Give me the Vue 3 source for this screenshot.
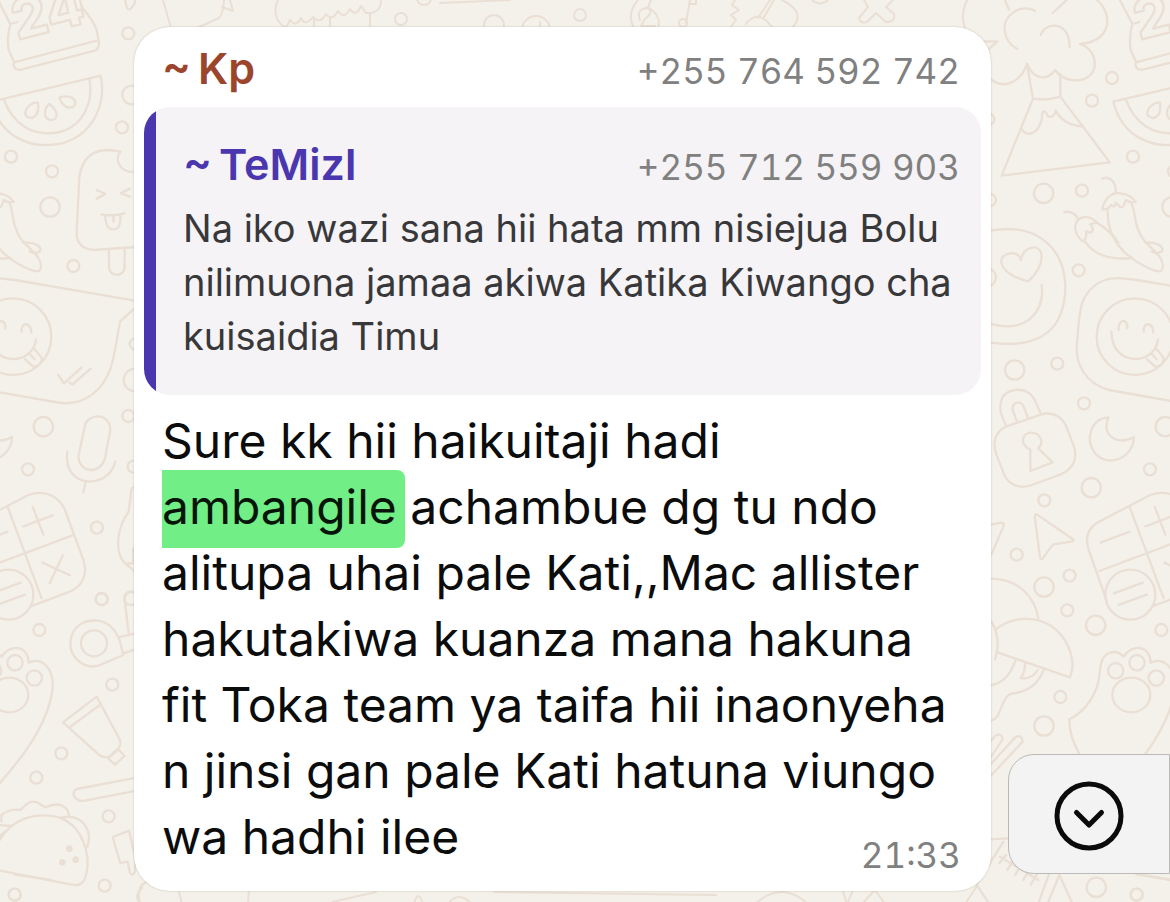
<script setup>
const message = {
  sender: '~\u2009Kp',
  phone: '+255 764 592 742',
  time: '21:33',
  firstLine: 'Sure kk hii haikuitaji hadi',
  highlight: 'ambangile',
  afterHighlight: 'achambue dg tu ndo',
  lines: [
    'alitupa uhai pale Kati,,Mac allister',
    'hakutakiwa kuanza mana hakuna',
    'fit Toka team ya taifa hii inaonyeha',
    'n jinsi gan pale Kati hatuna viungo',
    'wa hadhi ilee',
  ],
}

const quote = {
  sender: '~\u2009TeMizI',
  phone: '+255 712 559 903',
  lines: [
    'Na iko wazi sana hii hata mm nisiejua Bolu',
    'nilimuona jamaa akiwa Katika Kiwango cha',
    'kuisaidia Timu',
  ],
}

function scrollToEnd() {
  window.scrollTo({ top: document.body.scrollHeight, behavior: 'smooth' })
}
</script>

<template>
  <main class="chat">
    <svg class="wallpaper" aria-hidden="true">
      <defs>
        <g id="doodles">
          <!-- cake, melon, ice lolly -->
          <g transform="scale(0.3333)">
            <path d="M-6 0L31 72Q20 110 26 150L42 185Q36 208 60 210L285 152Q300 145 296 122L290 90Q285 70 245 20L240 0M42 187L290 122M31 72L52 66" />
            <text x="52" y="120" font-size="165" transform="rotate(-14 52 120)">24</text>
            <path d="M376 0Q380 30 388 29Q402 20 406 0" />
            <circle cx="385" cy="100" r="18" /><circle cx="395" cy="285" r="28" />
            <circle cx="366" cy="382" r="18" /><circle cx="33" cy="470" r="18" />
            <circle cx="156" cy="514" r="18" /><circle cx="150" cy="621" r="29" />
            <circle cx="220" cy="798" r="18" />
            <path d="M-26 305L302 227C320 310 280 405 185 430C90 450 0 410 -26 305ZM11 297C38 375 100 412 180 396C255 375 280 300 268 237" />
            <path d="M114 308C90 305 68 335 79 348C95 362 120 350 114 308ZM148 312C130 328 130 355 151 360C175 362 178 335 148 312ZM178 293C188 322 210 330 224 316C232 298 210 282 178 293Z" />
            <path d="M410 741L280 750Q230 745 230 700L238 530C248 465 285 450 330 450L362 455C340 480 362 522 410 515M290 570L316 582L290 596M390 566L362 580L390 590M304 643Q340 650 374 640M315 648C318 670 320 688 340 688C360 688 362 668 361 648M340 650L341 665M327 747V800C327 833 374 833 374 800V745" />
          </g>
          <!-- smiley bubble, microphone, calculator -->
          <g transform="translate(0 280) scale(0.3333)">
            <circle cx="39" cy="170" r="115" />
            <path d="M-10 150C-12 115 18 115 16 145M65 155C62 125 95 125 94 158M-32 155C-30 215 5 238 45 237C80 235 105 210 108 178M75 238L100 260C115 262 130 245 124 232L104 208M89 222L104 238" />
            <path d="M174 284L192 310L245 262M209 308L217 314L272 266" />
            <path d="M400 61L45 0L0 -5C-60 -10 -100 20 -120 70Q-130 110 -134 180C-145 250 -110 310 -40 330L165 366C250 385 320 330 340 235Q350 185 360 125L400 88" />
            <circle cx="130" cy="440" r="29" /><circle cx="84" cy="568" r="18" />
            <circle cx="385" cy="408" r="18" /><circle cx="405" cy="192" r="16" />
            <circle cx="405" cy="300" r="34" /><circle cx="401" cy="560" r="18" />
            <circle cx="291" cy="743" r="18" /><circle cx="305" cy="958" r="18" /><circle cx="392" cy="955" r="20" />
            <path d="M254 440C260 400 330 395 331 450L315 535C305 580 240 585 235 530ZM202 516C195 565 220 603 270 605C315 602 340 575 345 544M257 607L250 637" />
            <path d="M-55 718L85 645C140 625 180 655 195 690L250 840C265 885 245 920 210 935L95 978M-55 718C-95 735 -115 765 -100 810L-45 965M22 678L125 955M-68 873L218 766M98 680L130 764M70 739L158 706M127 848L210 886M189 825L149 910M-64 788L23 755" />
            <circle cx="25" cy="944" r="75" />
            <path d="M-25 940L62 908M-10 975L75 944" />
            <path d="M410 620L395 625L386 695C350 745 345 810 370 845L405 875M400 805V850L385 850" />
          </g>
          <!-- paw, tag, tube, taco -->
          <g transform="translate(0 580) scale(0.3333)">
            <circle cx="118" cy="150" r="18" /><circle cx="305" cy="57" r="18" />
            <circle cx="337" cy="314" r="18" /><circle cx="184" cy="520" r="18" />
            <circle cx="109" cy="593" r="18" /><circle cx="326" cy="709" r="18" />
            <circle cx="314" cy="917" r="18" /><circle cx="44" cy="944" r="18" />
            <circle cx="282" cy="190" r="39" />
            <path d="M370 225L295 257C255 268 210 235 211 190C215 135 255 118 295 122C330 128 350 155 360 185ZM355 172L415 158M370 220L415 205M386 160L374 60Q374 35 400 35" />
            <circle cx="45" cy="248" r="23" /><circle cx="103" cy="294" r="23" /><circle cx="-19" cy="272" r="23" />
            <ellipse cx="28" cy="345" rx="57" ry="52" />
            <path d="M-129 520Q-158 470 -158 418C-100 390 -75 330 -70 300L-64 255C-55 215 -20 205 5 230C30 190 85 195 86 248C125 230 165 265 157 330C145 430 70 530 -10 620" />
            <path d="M189 427L290 350L360 480Q365 500 347 512L330 529Q315 535 300 527ZM210 441L302 373M325 535L355 508L374 528L345 554Z" />
            <path d="M410 593L230 627C210 635 225 668 255 662L410 632" />
            <path d="M-10 795C35 710 110 695 180 713C250 740 270 825 260 875C255 905 245 920 215 914L-20 868M4 725V705Q30 685 60 690C75 680 80 665 100 665C120 665 125 680 138 682C170 665 205 675 207 708M185 713C240 700 280 745 262 800M-5 735L35 738M-5 770L20 752" />
            <g class="solid"><circle cx="208" cy="806" r="10" /><circle cx="187" cy="847" r="10" /><circle cx="227" cy="839" r="10" /></g>
            <path d="M338 771L387 752L405 830V875Q398 890 390 880L383 845L361 849ZM440 905C410 920 410 960 430 985" />
          </g>
          <!-- volcano, chillies, heart -->
          <g transform="translate(-152 0) scale(0.3333)">
            <path d="M195 32C145 10 100 50 104 90Q108 130 142 147M212 105C225 65 300 60 299 142M375 -5C430 35 430 125 330 132C390 150 395 245 310 241Q275 238 255 210C235 240 195 245 171 192C155 240 105 275 60 235M105 0L117 29M248 39L290 0M45 124H82L58 146" />
            <path d="M171 192L189 296L95 527L419 487L271 290V222M189 296Q230 303 271 290M153 385C175 420 215 395 217 340C220 330 228 333 233 347C245 355 255 347 257 332C275 365 305 378 340 379" />
            <circle cx="426" cy="234" r="18" /><circle cx="366" cy="302" r="18" />
            <circle cx="221" cy="580" r="29" /><circle cx="336" cy="572" r="18" />
            <circle cx="326" cy="811" r="18" /><circle cx="55" cy="358" r="18" />
            <circle cx="60" cy="600" r="18" /><circle cx="50" cy="832" r="28" />
            <path d="M398 536C420 525 440 550 437 578M397 628C405 590 430 575 450 580C480 583 488 595 497 606Q480 610 467 600Q461 628 449 620L437 608Q436 625 423 615Q415 630 397 628ZM413 632C412 700 445 750 500 785C540 810 570 820 576 810C590 780 550 750 525 725C490 680 500 650 485 610" />
            <path d="M283 636Q310 632 324 656M338 724C310 700 308 665 335 653Q360 646 381 667L361 673C375 690 368 704 348 694Q352 718 338 724ZM345 725C375 770 430 780 488 774M375 665Q420 690 445 728M525 728C560 725 585 740 575 755Q560 763 545 755" />
            <path d="M60 692C210 665 285 755 286 860C285 980 220 1050 60 1028M215 855C225 940 165 1000 60 972M175 844C110 830 80 790 100 769C125 750 150 762 153 780C160 740 205 730 214 760C220 800 190 830 175 844Z" />
          </g>
          <!-- padlock, moon, pointer -->
          <g transform="translate(-152 280) scale(0.3333)">
            <circle cx="134" cy="270" r="29" /><circle cx="262" cy="251" r="18" />
            <circle cx="342" cy="370" r="18" /><circle cx="364" cy="623" r="29" />
            <circle cx="223" cy="661" r="18" /><circle cx="140" cy="824" r="18" />
            <circle cx="299" cy="887" r="18" />
            <path d="M108 440L212 404C245 393 275 410 287 435L312 500C325 540 305 570 270 584L185 615C145 630 115 610 103 585L78 520C66 480 78 455 108 440ZM109 440L93 400C85 360 100 335 135 330C175 325 190 350 197 365L213 403M141 425L128 390C125 365 155 360 161 380L174 414" />
            <path d="M181 509C145 490 158 457 185 458C215 460 222 492 204 504L248 547L181 573Z" />
            <path d="M416 412C360 415 345 480 375 520C415 565 490 535 492 471C445 500 390 465 416 412Z" />
            <path d="M194 708Q195 700 204 706L308 777Q315 784 303 785L250 793Q235 810 220 834Q212 842 210 832ZM60 735L95 728Q104 728 100 740L64 824" />
          </g>
          <!-- umbrella, pencils, luggage tag -->
          <g transform="translate(-152 580) scale(0.3333)">
            <circle cx="222" cy="21" r="29" /><circle cx="292" cy="91" r="18" />
            <circle cx="377" cy="136" r="29" /><circle cx="271" cy="351" r="18" />
            <circle cx="222" cy="438" r="29" /><circle cx="379" cy="922" r="29" /><circle cx="500" cy="944" r="18" />
            <path d="M60 -4C150 -4 195 55 205 115M75 150C145 95 240 110 284 180C305 215 315 255 300 292L85 218M65 125Q95 180 75 238M137 240C120 290 95 310 60 317M222 268C205 310 180 335 120 342C90 360 95 415 65 421M165 250Q165 280 152 294Q185 300 203 270" />
            <path d="M60 485L78 466Q95 458 98 478L60 535M60 555L135 473Q155 460 158 485L60 590" />
            <path d="M60 778L110 775L225 780M100 785L20 915L70 990M90 830L205 900M88 850L108 825M112 870L130 840M136 885L152 855M160 900L178 868M182 914L200 885M238 880L205 970M268 885L225 990M268 885L305 965M500 884L610 900" />
          </g>
          <!-- edges above and below the bubble -->
          <g class="fine">
            <path d="M163 0L171 28M224 0Q223 15 219 18L197 28M230 0L233 11L222 7M278 0Q270 18 286 28L290 20Q296 28 301 18Q305 27 313 17Q320 25 326 14Q332 22 338 11Q344 20 350 9Q356 18 361 6L366 13Q381 14 381 0M314 18V28M330 17V28M370 13V28M440 3L510 0" />
            <circle cx="401" cy="19" r="6" /><circle cx="424" cy="-2" r="7" /><circle cx="494" cy="25" r="10" />
            <circle cx="536" cy="30" r="14" /><path d="M540 22V30" /><circle cx="580" cy="15" r="6" />
            <path d="M638 0Q626 14 634 28M651 0L648 7Q662 16 658 28M640 20Q636 9 647 8Q655 11 645 19L641 26H655M690 0L686 23M690 4H696V0" />
            <circle cx="683" cy="23" r="4" />
            <path d="M735 0L732 5L739 10L731 15L736 20L730 28M746 24Q758 8 772 27M774 0L764 17M782 0Q807 12 792 28M758 18L770 0M812 0Q820 7 828 0M864 0L868 7L859 18Q860 24 867 22L876 13L886 22Q896 22 894 14L886 7L893 0M967 0Q960 15 965 28" />
            <path d="M142 888Q132 898 142 904M178 888L182 904M249 888L248 904M332 902L376 892M414 904Q418 888 423 904M448 904Q458 890 472 904M494 892L716 895M755 904Q782 880 808 904M842 888L847 904L854 888M862 904L875 890L885 904M965 904L977 886" />
          </g>
        </g>
      </defs>
      <use href="#doodles" />
      <use href="#doodles" x="1122" />
    </svg>

    <article class="bubble">
      <header class="line head">
        <h2 class="name">{{ message.sender }}</h2>
        <span class="phone">{{ message.phone }}</span>
      </header>

      <blockquote class="quote">
        <div class="line">
          <h3 class="name quoted">{{ quote.sender }}</h3>
          <span class="phone">{{ quote.phone }}</span>
        </div>
        <p class="quote-text">
          <template v-for="(line, i) in quote.lines" :key="i">{{ line }}<br v-if="i < quote.lines.length - 1"></template>
        </p>
      </blockquote>

      <div class="content">
        <p class="text">{{ message.firstLine }}<br><mark>{{ message.highlight }}</mark> {{ message.afterHighlight }}<template v-for="(line, i) in message.lines" :key="i"><br>{{ line }}</template></p>
        <time class="time">{{ message.time }}</time>
      </div>
    </article>

    <button class="jump" type="button" aria-label="Scroll to latest message" @click="scrollToEnd">
      <svg width="70" height="70" viewBox="0 0 70 70" aria-hidden="true">
        <circle cx="35" cy="35" r="32" />
        <path d="M22.5 31.5L35 44L47.5 31.5" />
      </svg>
    </button>
  </main>
</template>

<style>
body {
  background: #f4f1ea;
}
</style>

<style scoped>
.chat {
  position: relative;
  box-sizing: border-box;
  min-height: 100vh;
  padding: 27px 179px 11px 134px;
  overflow: hidden;
  background: #f4f1ea;
  font-family: Inter, "Liberation Sans", sans-serif;
  color: #0b0c0c;
}

.wallpaper {
  position: absolute;
  inset: 0;
  width: 100%;
  height: 100%;
  fill: none;
  stroke: #eadfd4;
  stroke-width: 7;
  stroke-linecap: round;
  stroke-linejoin: round;
}

.wallpaper text {
  font-family: Inter, sans-serif;
  font-weight: 800;
}

.wallpaper .solid {
  fill: #eadfd4;
  stroke: none;
}

.wallpaper .fine {
  stroke-width: 2;
}

.bubble {
  position: relative;
  padding: 15px 10px 21px;
  border-radius: 36px;
  background: #fff;
  box-shadow: 0 0 2px rgba(90, 70, 50, 0.3);
}

.line {
  display: flex;
  align-items: baseline;
  justify-content: space-between;
  height: 52px;
  line-height: 52px;
}

.head {
  padding: 0 21px 0 18px;
}

.name {
  margin: 0;
  font-size: 43px;
  font-weight: 600;
  color: #9b452c;
  white-space: nowrap;
}

.quoted {
  color: #4a36ae;
}

.phone,
.time {
  font-size: 35px;
  font-variant-numeric: tabular-nums;
  color: #808080;
  white-space: nowrap;
}

.quote {
  margin: 13px 0 0;
  padding: 31px 21px 32px 39px;
  border-radius: 26px;
  background: linear-gradient(to right, #4a36ae 12px, #f5f3f5 12px);
}

.quote-text {
  margin: 11px 0 0;
  font-size: 38px;
  line-height: 54px;
  color: #38383a;
  white-space: nowrap;
}

.content {
  display: grid;
  margin-top: 13px;
  padding: 0 20px 0 18px;
}

.text,
.time {
  grid-area: 1 / 1;
}

.text {
  margin: 0;
  font-size: 48px;
  line-height: 66px;
  white-space: nowrap;
}

mark {
  padding: 7px 8px 12px 0;
  margin-right: -8px;
  border-radius: 0 8px 8px 0;
  background: #72ee87;
  color: #071508;
}

.time {
  place-self: end;
  line-height: 30px;
}

.jump {
  position: absolute;
  right: 0;
  bottom: 28px;
  display: grid;
  place-items: center;
  width: 162px;
  height: 120px;
  padding: 3px 0 0;
  border: 1px solid #bcbab8;
  border-radius: 26px 0 0 26px;
  background: #f3f3f3;
  cursor: pointer;
}

.jump svg {
  fill: none;
  stroke: #0b0b0b;
  stroke-width: 5;
  stroke-linecap: round;
  stroke-linejoin: round;
}
</style>
